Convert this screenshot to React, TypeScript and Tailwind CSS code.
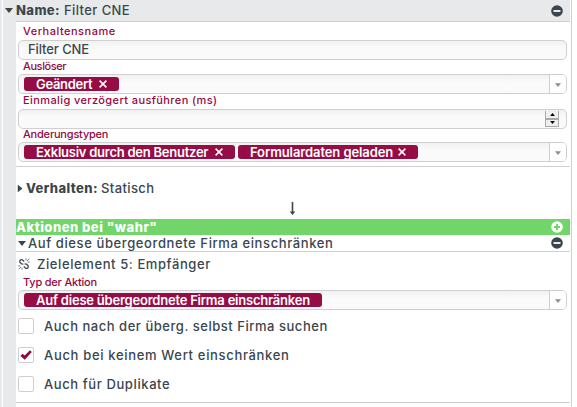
import type { ReactNode } from 'react'

function MinusIcon() {
  return (
    <svg className="w-3 h-3 shrink-0" viewBox="0 0 12 12">
      <circle cx="6" cy="6" r="5.8" fill="#3a464e" />
      <rect x="2.5" y="5" width="7" height="2" rx="0.4" fill="#e8e9eb" />
    </svg>
  )
}

function PlusIcon() {
  return (
    <svg className="w-3 h-3 shrink-0" viewBox="0 0 12 12">
      <circle cx="6" cy="6" r="5.8" fill="#fff" />
      <path d="M5 3h2v2h2v2H7v2H5V7H3V5h2z" fill="#71d569" />
    </svg>
  )
}

function UnlinkIcon() {
  return (
    <svg className="w-3 h-3 shrink-0" viewBox="0 0 12 12" fill="none" stroke="#3a464e" strokeWidth="1.3">
      <path d="M6.2 3.6 4.6 2C3.2.8.9 2.6 2 4.3l1.6 1.6 1.8.2M5.8 8.4 7.4 10c1.4 1.2 3.7-.6 2.6-2.3L8.4 6.1 6.6 5.9" />
      <path d="M8 .3v2.2M9 3l2.4-2.2M9.6 4.1h2.2M4 9.5v2.2M3 9 .6 11.2M2.4 7.9H.2" strokeWidth="0.7" />
    </svg>
  )
}

function Caret({ className }: { className: string }) {
  return (
    <svg className={className} viewBox="0 0 8 5">
      <path d="M0 0h8L4 5z" fill="currentColor" />
    </svg>
  )
}

function Label({ children, className }: { children: ReactNode; className: string }) {
  return <div className={`pl-[7px] text-[11px] font-medium text-[#94093f] whitespace-nowrap ${className}`}>{children}</div>
}

function Field({ children, select }: { children?: ReactNode; select?: boolean }) {
  return (
    <div className="ml-0.5 mr-[3px] flex h-5 shrink-0 overflow-hidden rounded-[5px] border border-[#cfcfcf] bg-gradient-to-b from-[#f1f1f1] to-[#fafafa] to-40%">
      <div className="flex flex-1 items-center gap-[3px] pl-[5px]">{children}</div>
      {select && (
        <div className="flex w-[17px] items-center justify-center border-l border-[#cfcfcf] bg-white pt-0.5 text-[#869098]">
          <Caret className="w-1.5 h-1" />
        </div>
      )}
    </div>
  )
}

function Tag({ children, className, removable = true }: { children: ReactNode; className: string; removable?: boolean }) {
  return (
    <div className={`flex h-3.5 items-center rounded-[3px] bg-[#960d45] pl-3 text-[13px] leading-[14px] font-semibold whitespace-nowrap text-white ${className}`}>
      <span className="flex-1">{children}</span>
      {removable && (
        <svg className="mr-3 w-2 h-2 shrink-0" viewBox="0 0 8 8">
          <path d="M.6.6l6.8 6.8M7.4.6L.6 7.4" stroke="#fff" strokeWidth="1.5" />
        </svg>
      )}
    </div>
  )
}

function Check({ children, checked, className }: { children: ReactNode; checked?: boolean; className: string }) {
  return (
    <label className="ml-0.5 mb-[13px] flex h-4 items-center">
      <span className="flex w-4 h-4 shrink-0 items-center justify-center rounded-[2px] border border-[#cfcfcf] bg-white">
        {checked && (
          <svg className="w-3 h-2.5" viewBox="0 0 12 10">
            <path d="M.4 5.9l2.1-2.1 2.2 1.6L9.9.2l1.9 1.7L4.8 9.8z" fill="#94093f" />
          </svg>
        )}
      </span>
      <span className={`ml-2.5 pt-0.5 whitespace-nowrap ${className}`}>{children}</span>
    </label>
  )
}

export default function App() {
  return (
    <div className="flex h-[407px] w-[577px] overflow-hidden bg-white font-['Inter','Noto_Sans',sans-serif] text-[13px] font-medium text-[#3a464e]">
      <div className="w-0.5 bg-[#e8e9eb]" />
      <div className="ml-px flex w-[569px] flex-col border-r border-[#cfcfcf]">
        <div className="mr-px flex h-[21px] shrink-0 items-center bg-[#e8e9eb] pl-0.5 pr-[7px]">
          <Caret className="w-2 h-[5px]" />
          <span className="ml-[3px] w-12 font-extrabold tracking-[0.4px]">Name:</span>
          <span className="tracking-[0.4px]">Filter CNE</span>
          <span className="ml-auto">
            <MinusIcon />
          </span>
        </div>
        <div className="mr-px flex flex-1 border-l-[13px] border-[#e8e9eb]">
          <div className="flex w-[554px] flex-col border-t border-[#cfcfcf]">
            <Label className="h-[18px] leading-[19px] tracking-[0.5px]">Verhaltensname</Label>
            <Field>
              <span className="ml-1 tracking-[-0.1px]">Filter CNE</span>
            </Field>
            <Label className="h-3.5 leading-[13px] tracking-[-0.4px]">Auslöser</Label>
            <Field select>
              <Tag className="w-[95px] tracking-[-0.3px]">Geändert</Tag>
            </Field>
            <Label className="h-[15px] leading-[13px] tracking-[0.4px]">Einmalig verzögert ausführen (ms)</Label>
            <Field>
              <div className="ml-auto mr-[7px] flex h-4 w-3.5 flex-col border-x border-b border-[#aaa] bg-[#efefef] text-black">
                <div className="flex flex-1 items-center justify-center border-b-2 border-[#aaa]">
                  <Caret className="w-[5px] h-[3px] rotate-180" />
                </div>
                <div className="flex flex-1 items-center justify-center">
                  <Caret className="w-[5px] h-[3px]" />
                </div>
              </div>
            </Field>
            <Label className="h-[13px] leading-[11px] tracking-[-0.2px]">Anderungstypen</Label>
            <Field select>
              <Tag className="w-[211px] tracking-[-0.25px]">Exklusiv durch den Benutzer</Tag>
              <Tag className="w-[180px] tracking-[-0.1px]">Formulardaten geladen</Tag>
            </Field>
            <div className="mt-1 h-px shrink-0 bg-[#cfcfcf]" />
            <div className="mt-[13px] flex h-4 items-center pl-0.5">
              <Caret className="w-2 h-[5px] -rotate-90 -ml-[2px]" />
              <span className="ml-[2px] w-[75px] pt-0.5 font-extrabold tracking-[0.4px]">Verhalten:</span>
              <span className="pt-0.5 tracking-[0.4px]">Statisch</span>
            </div>
            <svg className="mt-1.5 ml-[273px] w-[7px] h-[13px] shrink-0" viewBox="0 0 7 13">
              <path d="M2.7 0h1.6v9.5h2L3.5 13 .7 9.5h2z" fill="#3a464e" />
            </svg>
            <div className="mt-1 flex h-4 shrink-0 items-center bg-[#71d569] pr-[7px] font-extrabold text-white">
              <span className="pt-0.5 tracking-[0.5px]">Aktionen bei "wahr"</span>
              <span className="ml-auto">
                <PlusIcon />
              </span>
            </div>
            <div className="flex h-[17px] shrink-0 items-center border-b border-[#cfcfcf] pl-0.5 pr-[7px]">
              <Caret className="w-2 h-[5px]" />
              <span className="ml-0.5 pt-0.5 tracking-[0.6px]">Auf diese übergeordnete Firma einschränken</span>
              <span className="ml-auto">
                <MinusIcon />
              </span>
            </div>
            <div className="flex h-6 items-center pl-0.5">
              <UnlinkIcon />
              <span className="ml-[7px] pt-px tracking-[0.6px]">Zielelement 5: Empfänger</span>
            </div>
            <Label className="h-3.5 leading-[13px] tracking-[-0.2px]">Typ der Aktion</Label>
            <Field select>
              <Tag className="w-[298px] tracking-[-0.22px]" removable={false}>Auf diese übergeordnete Firma einschränken</Tag>
            </Field>
            <div className="mt-2 border-b border-[#cfcfcf] h-[85px] shrink-0">
              <Check className="tracking-[0.53px]">Auch nach der überg. selbst Firma suchen</Check>
              <Check className="tracking-[0.67px]" checked>Auch bei keinem Wert einschränken</Check>
              <Check className="tracking-[0.6px]">Auch für Duplikate</Check>
            </div>
          </div>
        </div>
      </div>
    </div>
  )
}
